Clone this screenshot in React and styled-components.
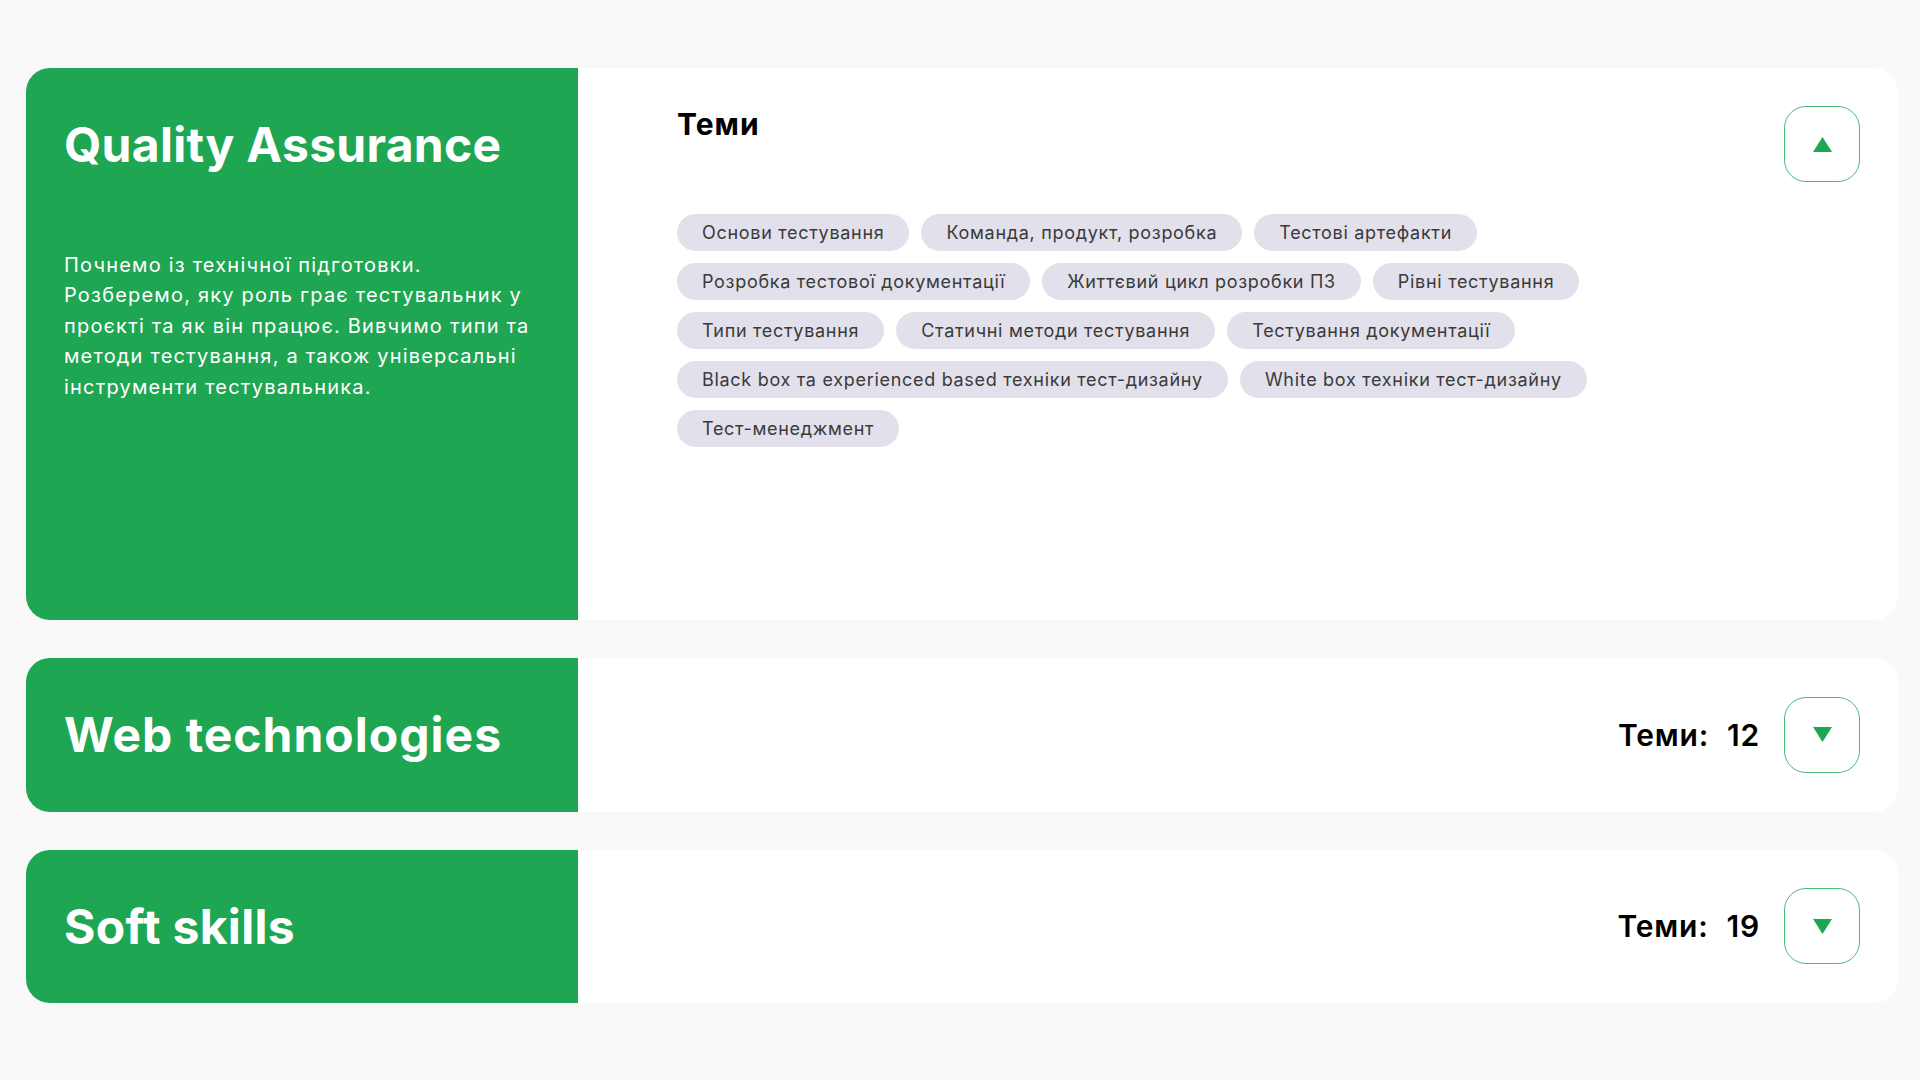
import React from "react";
import styled, { createGlobalStyle } from "styled-components";

const GlobalStyle = createGlobalStyle`
  body {
    margin: 0;
    background: #f9f9f9;
    font-family: Inter, "Noto Sans", sans-serif;
    color: #111;
  }
`;

const Page = styled.div`
  display: flex;
  flex-direction: column;
  gap: 38px;
  padding: 68px 22px 60px 26px;
`;

const Card = styled.section`
  display: flex;
  background: #fff;
  border-radius: 24px;
  overflow: hidden;
  min-height: ${(props) => (props.$open ? "552px" : "0")};
`;

const Side = styled.div`
  width: 552px;
  flex-shrink: 0;
  box-sizing: border-box;
  padding: 48px 30px 48px 38px;
  background: #1fa653;
  color: #fff;
  display: flex;
  flex-direction: column;
  justify-content: ${(props) => (props.$open ? "flex-start" : "center")};
`;

const Title = styled.h2`
  margin: 0;
  font-size: 48px;
  line-height: 1.2;
  font-weight: 700;
  letter-spacing: ${(props) => props.$spacing || "0.3px"};
`;

const Description = styled.p`
  margin: 76px 0 0;
  font-size: 20px;
  line-height: 30.5px;
  font-weight: 400;
  letter-spacing: 1.2px;
`;

const Body = styled.div`
  flex: 1;
  display: flex;
  align-items: ${(props) => (props.$open ? "flex-start" : "center")};
  justify-content: flex-end;
  gap: 24px;
  padding: 38px 38px 38px 99px;
`;

const Topics = styled.div`
  flex: 1;
  margin-right: 16px;
`;

const TopicsHeading = styled.h3`
  margin: 0;
  font-size: 30px;
  line-height: 36px;
  font-weight: 700;
  letter-spacing: 1px;
  color: #000;
`;

const ChipList = styled.div`
  display: flex;
  flex-wrap: wrap;
  gap: 12px;
  margin-top: 72px;
`;

const Chip = styled.span`
  padding: 8px 25px;
  border-radius: 20px;
  background: #e2e0ea;
  color: #3a3a3a;
  font-size: 18px;
  line-height: 21px;
  letter-spacing: 0.7px;
`;

const Count = styled.div`
  display: flex;
  align-items: center;
  gap: 18px;
  font-size: 30px;
  font-weight: 600;
  letter-spacing: 0.8px;
  color: #000;
`;

const ToggleButton = styled.button`
  width: 76px;
  height: 76px;
  flex-shrink: 0;
  display: grid;
  place-items: center;
  padding: 0;
  background: #fff;
  border: 1.5px solid #4cbb78;
  border-radius: 22px;
  cursor: pointer;
`;

function Arrow({ up }) {
  return (
    <svg width="19" height="15" viewBox="0 0 19 15">
      <polygon
        points={up ? "9.5,0 19,15 0,15" : "0,0 19,0 9.5,15"}
        fill="#1fa653"
      />
    </svg>
  );
}

const qaTopics = [
  "Основи тестування",
  "Команда, продукт, розробка",
  "Тестові артефакти",
  "Розробка тестової документації",
  "Життєвий цикл розробки ПЗ",
  "Рівні тестування",
  "Типи тестування",
  "Статичні методи тестування",
  "Тестування документації",
  "Black box та experienced based техніки тест-дизайну",
  "White box техніки тест-дизайну",
  "Тест-менеджмент",
];

const courses = [
  {
    title: "Quality Assurance",
    description:
      "Почнемо із технічної підготовки. Розберемо, яку роль грає тестувальник у проєкті та як він працює. Вивчимо типи та методи тестування, а також універсальні інструменти тестувальника.",
    topics: qaTopics,
    open: true,
  },
  { title: "Web technologies", count: 12, spacing: "1px" },
  { title: "Soft skills", count: 19 },
];

function CourseCard({ course }) {
  const { title, description, topics, count, open, spacing } = course;
  return (
    <Card $open={open}>
      <Side $open={open}>
        <Title $spacing={spacing}>{title}</Title>
        {open && <Description>{description}</Description>}
      </Side>
      <Body $open={open}>
        {open ? (
          <Topics>
            <TopicsHeading>Теми</TopicsHeading>
            <ChipList>
              {topics.map((t) => (
                <Chip key={t}>{t}</Chip>
              ))}
            </ChipList>
          </Topics>
        ) : (
          <Count>
            <span>Теми:</span>
            <span>{count}</span>
          </Count>
        )}
        <ToggleButton aria-label={open ? "Згорнути" : "Розгорнути"}>
          <Arrow up={open} />
        </ToggleButton>
      </Body>
    </Card>
  );
}

export default function App() {
  return (
    <>
      <GlobalStyle />
      <Page>
        {courses.map((c) => (
          <CourseCard key={c.title} course={c} />
        ))}
      </Page>
    </>
  );
}
